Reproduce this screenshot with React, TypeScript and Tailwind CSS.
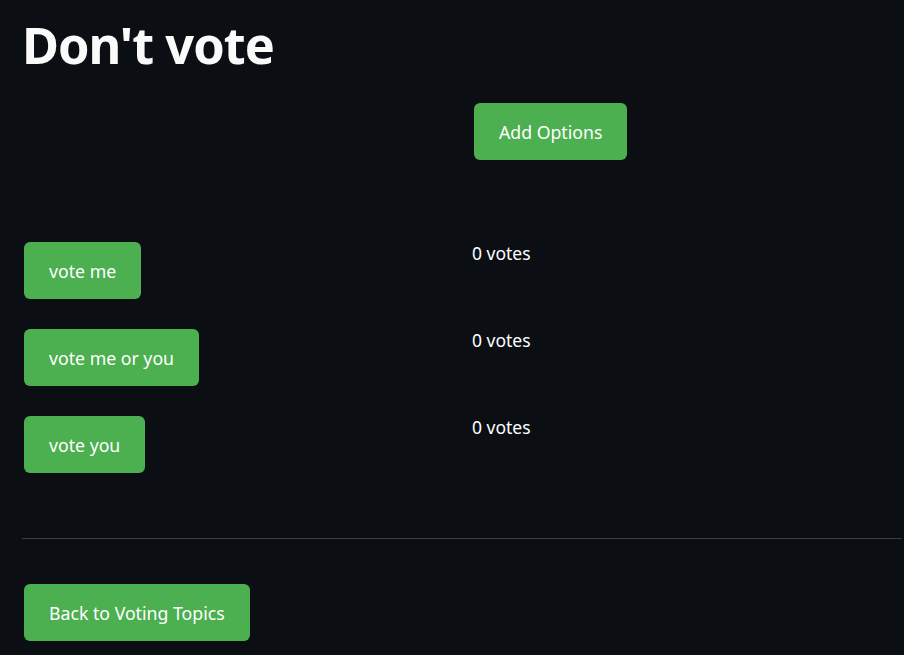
export default function App() {
  const btn =
    "h-[57px] rounded-md bg-[#4caf50] px-[25px] pt-[2px] text-[17.7px] text-white whitespace-nowrap";
  const rows = ["vote me", "vote me or you", "vote you"];
  return (
    <div
      className="min-h-[655px] w-[904px] bg-[#0b0f13] text-white"
      style={{ fontFamily: '"Noto Sans", sans-serif' }}
    >
      <div className="pl-[22px] pr-[2px] pt-[15px]">
        <h1 className="text-[50.5px] font-bold leading-[60px] tracking-[-1px] text-[#fafafa]">
          Don't vote
        </h1>
        <div className="mt-[28px] grid grid-cols-[452px_1fr]">
          <div />
          <div>
            <button className={btn}>Add Options</button>
          </div>
        </div>
        <div className="mt-[82px] flex flex-col gap-[30px]">
          {rows.map((r) => (
            <div key={r} className="grid grid-cols-[448px_1fr] pl-[2px]">
              <div>
                <button className={btn}>{r}</button>
              </div>
              <div className="-mt-[1px] text-[17.5px] leading-[24px]">0 votes</div>
            </div>
          ))}
        </div>
        <div className="mt-[65px] h-px bg-[#3b3d42]" />
        <div className="mt-[45px] pl-[2px]">
          <button className={btn}>Back to Voting Topics</button>
        </div>
      </div>
    </div>
  );
}
